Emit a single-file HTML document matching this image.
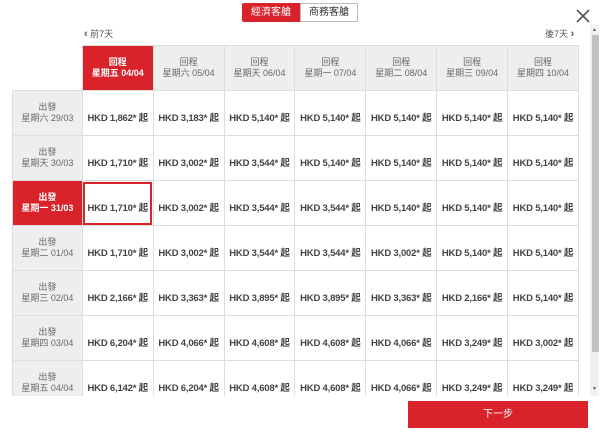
<!DOCTYPE html>
<html><head><meta charset="utf-8"><style>
*{margin:0;padding:0;box-sizing:border-box}
body{width:600px;height:439px;background:#fff;font-family:"Liberation Sans","Noto Sans CJK TC",sans-serif;position:relative;overflow:hidden;color:#333}
.tab{position:absolute;top:3px;height:19px;width:58px;font-size:10px;text-align:center;line-height:17px;border:1px solid #bbb}
.t1{left:242px;background:#d9222a;color:#fff;border-color:#d9222a;border-radius:2px 0 0 2px}
.t2{left:300px;background:#fff;color:#333;border-radius:0 2px 2px 0}
.close{position:absolute;left:574px;top:7px;width:18px;height:18px}
.nav{position:absolute;font-size:9px;color:#555;top:27px}
.wrap{position:absolute;left:12px;top:45px;width:567px;height:351px;overflow:hidden}
table{border-collapse:collapse;table-layout:fixed}
td{border:1px solid #ddd;text-align:center;font-size:9.5px;height:45px;width:71px;font-weight:bold;color:#444;white-space:nowrap;padding-top:7px;letter-spacing:-0.2px}
td.h{background:#eee;font-weight:normal;font-size:9px;color:#666;line-height:11px;height:44px;padding-top:0;letter-spacing:0}
td.rh{background:#eee;font-weight:normal;font-size:9px;color:#666;line-height:11px;width:70px;padding-top:0;letter-spacing:0}
td.red{background:#d9222a;color:#fff;font-weight:bold}
td.sel{outline:2px solid #d9222a;outline-offset:-3px}
td.empty{border:none;background:#fff;border-bottom:1px solid #ddd}
.sb{position:absolute;left:590px;top:25px;width:9px;height:371px;background:#f1f1f1}
.thumb{position:absolute;left:592px;top:35px;width:7px;height:317px;background:#c1c1c1}
.btn{position:absolute;left:408px;top:401px;width:180px;height:27px;background:#d9222a;color:#fff;font-size:10px;text-align:center;line-height:27px}
</style></head><body>
<div class="tab t1">經濟客艙</div><div class="tab t2">商務客艙</div>
<svg class="close" viewBox="0 0 18 18"><path d="M3 3L15 15M15 3L3 15" stroke="#555" stroke-width="1.6"/></svg>
<div class="nav" style="left:84px"><b style="font-size:11px">&#8249;</b> 前7天</div>
<div class="nav" style="left:545px">後7天 <b style="font-size:11px">&#8250;</b></div>
<div class="nav" style="left:18px;top:72px"><b>^</b> 前7天</div>
<div class="sb"></div><div class="thumb"></div>
<div style="position:absolute;left:592px;top:27px;font-size:5px;color:#555">▲</div>
<div style="position:absolute;left:592px;top:386px;font-size:5px;color:#555">▼</div>
<div class="wrap"><table>
<tr><td class="empty" style="width:70px"></td><td class="h red">回程<br>星期五 04/04</td><td class="h">回程<br>星期六 05/04</td><td class="h">回程<br>星期天 06/04</td><td class="h">回程<br>星期一 07/04</td><td class="h">回程<br>星期二 08/04</td><td class="h">回程<br>星期三 09/04</td><td class="h">回程<br>星期四 10/04</td></tr>
<tr><td class="rh">出發<br>星期六 29/03</td><td>HKD 1,862* 起</td><td>HKD 3,183* 起</td><td>HKD 5,140* 起</td><td>HKD 5,140* 起</td><td>HKD 5,140* 起</td><td>HKD 5,140* 起</td><td>HKD 5,140* 起</td></tr>
<tr><td class="rh">出發<br>星期天 30/03</td><td>HKD 1,710* 起</td><td>HKD 3,002* 起</td><td>HKD 3,544* 起</td><td>HKD 5,140* 起</td><td>HKD 5,140* 起</td><td>HKD 5,140* 起</td><td>HKD 5,140* 起</td></tr>
<tr><td class="rh red">出發<br>星期一 31/03</td><td class="sel">HKD 1,710* 起</td><td>HKD 3,002* 起</td><td>HKD 3,544* 起</td><td>HKD 3,544* 起</td><td>HKD 5,140* 起</td><td>HKD 5,140* 起</td><td>HKD 5,140* 起</td></tr>
<tr><td class="rh">出發<br>星期二 01/04</td><td>HKD 1,710* 起</td><td>HKD 3,002* 起</td><td>HKD 3,544* 起</td><td>HKD 3,544* 起</td><td>HKD 3,002* 起</td><td>HKD 5,140* 起</td><td>HKD 5,140* 起</td></tr>
<tr><td class="rh">出發<br>星期三 02/04</td><td>HKD 2,166* 起</td><td>HKD 3,363* 起</td><td>HKD 3,895* 起</td><td>HKD 3,895* 起</td><td>HKD 3,363* 起</td><td>HKD 2,166* 起</td><td>HKD 5,140* 起</td></tr>
<tr><td class="rh">出發<br>星期四 03/04</td><td>HKD 6,204* 起</td><td>HKD 4,066* 起</td><td>HKD 4,608* 起</td><td>HKD 4,608* 起</td><td>HKD 4,066* 起</td><td>HKD 3,249* 起</td><td>HKD 3,002* 起</td></tr>
<tr><td class="rh">出發<br>星期五 04/04</td><td>HKD 6,142* 起</td><td>HKD 6,204* 起</td><td>HKD 4,608* 起</td><td>HKD 4,608* 起</td><td>HKD 4,066* 起</td><td>HKD 3,249* 起</td><td>HKD 3,249* 起</td></tr>
</table></div>
<div class="btn">下一步</div>
</body></html>
